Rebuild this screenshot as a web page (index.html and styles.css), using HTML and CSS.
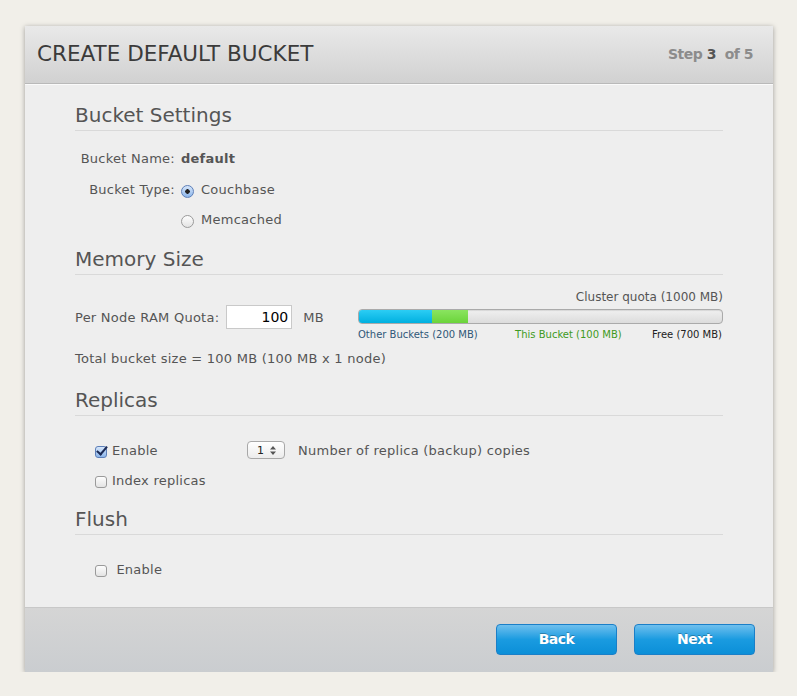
FILE: index.html
```html
<!DOCTYPE html>
<html lang="en">
<head>
    <meta charset="UTF-8">
    <title>Create Default Bucket</title>
    <link rel="stylesheet" href="styles.css">
</head>
<body>
    <div class="dialog">
        <div class="dialog-header">
            <h1>CREATE DEFAULT BUCKET</h1>
            <div class="step">Step <b>3</b> &nbsp;of 5</div>
        </div>

        <div class="dialog-body">
            <h2>Bucket Settings</h2>
            <div class="settings">
                <div class="row">
                    <span class="label name-label">Bucket Name:</span>
                    <strong class="value">default</strong>
                </div>
                <div class="row">
                    <span class="label">Bucket Type:</span>
                    <label class="radio"><input type="radio" name="type" checked> Couchbase</label>
                </div>
                <div class="row">
                    <span class="label"></span>
                    <label class="radio"><input type="radio" name="type"> Memcached</label>
                </div>
            </div>

            <h2>Memory Size</h2>
            <div class="memory">
                <div class="quota">
                    <span>Per Node RAM Quota:</span>
                    <input class="ram-input" type="text" value="100">
                    <span>MB</span>
                </div>
                <div class="usage">
                    <div class="usage-title">Cluster quota (1000 MB)</div>
                    <div class="bar">
                        <div class="seg seg-other" style="width: 20%"></div>
                        <div class="seg seg-this" style="width: 10%"></div>
                    </div>
                    <div class="legend">
                        <span class="l-other">Other Buckets (200 MB)</span>
                        <span class="l-this">This Bucket (100 MB)</span>
                        <span class="l-free">Free (700 MB)</span>
                    </div>
                </div>
            </div>
            <p class="total">Total bucket size = 100 MB (100 MB x 1 node)</p>

            <h2>Replicas</h2>
            <div class="replicas">
                <div class="row">
                    <label class="check enable-col"><input type="checkbox" checked>Enable</label>
                    <span class="select">1
                        <svg width="6" height="9" viewBox="0 0 6 9"><path d="M3 0 L6 3.5 H0 Z M3 9 L6 5.5 H0 Z" fill="#555"/></svg>
                    </span>
                    <span>Number of replica (backup) copies</span>
                </div>
                <div class="row">
                    <label class="check"><input type="checkbox">Index replicas</label>
                </div>
            </div>

            <h2>Flush</h2>
            <div class="flush">
                <label class="check"><input type="checkbox">&nbsp;Enable</label>
            </div>
        </div>

        <div class="dialog-footer">
            <button class="btn">Back</button>
            <button class="btn">Next</button>
        </div>
    </div>
</body>
</html>
```

FILE: styles.css
```css
* {
    margin: 0;
    padding: 0;
    box-sizing: border-box;
}

body {
    background-color: #f1efe9;
    font-family: 'DejaVu Sans', Verdana, sans-serif;
    font-size: 13px;
    letter-spacing: 0.25px;
    color: #555;
    padding: 26px 24px 0 25px;
}

.dialog {
    width: 748px;
    background-color: #eeeeee;
    box-shadow: 0 1px 5px rgba(0, 0, 0, 0.35);
}

.dialog-header {
    height: 58px;
    display: flex;
    align-items: center;
    justify-content: space-between;
    padding: 0 20px 0 12px;
    background: linear-gradient(#e9e9e9, #d1d1d1);
    border-bottom: 1px solid #b9b9b9;
    box-shadow: 0 1px 0 #fafafa;
}

.dialog-header h1 {
    font-size: 21.5px;
    font-weight: normal;
    color: #3b3b3b;
    letter-spacing: 0;
    padding-bottom: 2px;
}

.step {
    font-size: 14px;
    font-weight: bold;
    color: #8c8c8c;
    letter-spacing: -0.5px;
    padding-bottom: 1px;
}

.step b {
    color: #555;
}

.dialog-body {
    padding: 19px 50px 30px 50px;
}

h2 {
    font-size: 20px;
    font-weight: normal;
    color: #555;
    padding-bottom: 3px;
    border-bottom: 1px solid #d9d9d9;
    margin-bottom: 15px;
    letter-spacing: 0;
}

.settings {
    margin-bottom: 13px;
}

.settings .row {
    display: flex;
    align-items: center;
    height: 30px;
}

.settings .row:first-child {
    height: 24px;
    margin-bottom: 4px;
}

.label {
    width: 106px;
    text-align: right;
    padding-right: 6px;
}

.value {
    color: #555;
}

.radio {
    display: flex;
    align-items: center;
}

.radio input {
    appearance: none;
    width: 13px;
    height: 13px;
    border-radius: 50%;
    border: 1px solid #9a9a9a;
    background: linear-gradient(#fdfdfd, #e3e3e3);
    margin: 5px 7px 0 0;
}

.radio input:checked {
    border-color: #5d7fb8;
    background: radial-gradient(circle, #222 0 2px, transparent 2.5px), linear-gradient(#d6e6fa, #8cb5ea);
}

.memory {
    display: flex;
    align-items: flex-start;
    justify-content: space-between;
}

.quota {
    display: flex;
    align-items: center;
    margin-top: 15px;
}

.ram-input {
    width: 66px;
    height: 24px;
    margin: 0 11px 0 7px;
    border: 1px solid #c9c9c9;
    background: #fff;
    font-family: 'DejaVu Sans', Verdana, sans-serif;
    font-size: 14px;
    color: #000;
    text-align: right;
    padding: 0 3px;
}

.usage {
    width: 365px;
}

.usage-title {
    text-align: right;
    font-size: 12px;
    letter-spacing: 0;
    margin-bottom: 5px;
    color: #555;
}

.bar {
    height: 15px;
    display: flex;
    background: linear-gradient(#f0f0f0, #dcdcdc);
    border: 1px solid #aaa;
    border-radius: 4px;
    overflow: hidden;
    box-shadow: inset 0 1px 1px rgba(0, 0, 0, 0.1);
}

.seg-other {
    background: linear-gradient(#2ccdf4, #00b0e0);
}

.seg-this {
    background: linear-gradient(#8ae460, #6bd43a);
}

.legend {
    display: flex;
    justify-content: space-between;
    font-size: 10px;
    letter-spacing: 0;
    margin-top: 5px;
    padding-right: 1px;
}

.l-other {
    color: #305878;
}

.l-this {
    color: #3e9a22;
    margin-left: 7px;
}

.l-free {
    color: #222;
}

.total {
    margin-top: 11px;
    margin-bottom: 22px;
}

.replicas {
    padding-left: 20px;
    padding-top: 4px;
    margin-bottom: 12px;
}

.replicas .row {
    display: flex;
    align-items: center;
    height: 30px;
}

.check {
    display: flex;
    align-items: center;
}

.enable-col {
    width: 152px;
}

.check input {
    appearance: none;
    width: 12px;
    height: 12px;
    border: 1px solid #9a9a9a;
    border-radius: 3px;
    background: linear-gradient(#fdfdfd, #e3e3e3);
    margin: 3px 5px 0 0;
    position: relative;
}

.check input:checked {
    border-color: #5d7fb8;
    background: linear-gradient(#d6e6fa, #8cb5ea);
}

.check input:checked::after {
    content: "";
    position: absolute;
    left: 3px;
    top: -3px;
    width: 4px;
    height: 9px;
    border: solid #1b2a55;
    border-width: 0 2.5px 2.5px 0;
    transform: rotate(40deg);
}

.select {
    display: inline-flex;
    align-items: center;
    justify-content: space-between;
    width: 38px;
    height: 18px;
    margin-right: 13px;
    padding: 0 8px 0 9px;
    border: 1px solid #a8a8a8;
    border-radius: 4px;
    background: linear-gradient(#ffffff, #ececec);
    font-size: 11px;
    color: #222;
}

.flush {
    padding-left: 20px;
    padding-top: 12px;
}

.dialog-footer {
    height: 65px;
    border-top: 1px solid #c8c8c8;
    background: linear-gradient(#d5d5d5, #cacdd0);
    display: flex;
    justify-content: flex-end;
    align-items: flex-start;
    gap: 17px;
    padding: 16px 18px 0 0;
}

.btn {
    width: 121px;
    height: 31px;
    border: 1px solid #1a7fc8;
    border-radius: 4px;
    background: linear-gradient(#6fbfee, #1a9be0 50%, #0b8fd8);
    color: #fff;
    font-family: 'DejaVu Sans', Verdana, sans-serif;
    font-size: 14px;
    font-weight: bold;
    letter-spacing: -0.5px;
    padding-bottom: 2px;
    text-shadow: 0 -1px 0 rgba(0, 0, 0, 0.25);
}
```
